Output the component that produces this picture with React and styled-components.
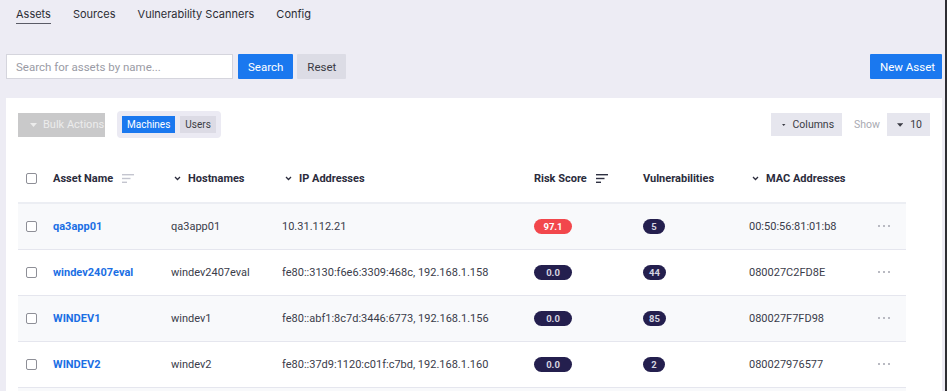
import styled, { createGlobalStyle } from "styled-components";

const GlobalStyle = createGlobalStyle`
  html, body {
    margin: 0;
    padding: 0;
    overflow: hidden;
    background: #edecf4;
  }
  body {
    font-family: Roboto, "Noto Sans", sans-serif;
    color: #3a3c4a;
  }
`;

const rows = [
  {
    name: "qa3app01",
    host: "qa3app01",
    ip: "10.31.112.21",
    risk: "97.1",
    high: true,
    vulns: "5",
    mac: "00:50:56:81:01:b8",
  },
  {
    name: "windev2407eval",
    host: "windev2407eval",
    ip: "fe80::3130:f6e6:3309:468c, 192.168.1.158",
    risk: "0.0",
    vulns: "44",
    mac: "080027C2FD8E",
  },
  {
    name: "WINDEV1",
    host: "windev1",
    ip: "fe80::abf1:8c7d:3446:6773, 192.168.1.156",
    risk: "0.0",
    vulns: "85",
    mac: "080027F7FD98",
  },
  {
    name: "WINDEV2",
    host: "windev2",
    ip: "fe80::37d9:1120:c01f:c7bd, 192.168.1.160",
    risk: "0.0",
    vulns: "2",
    mac: "080027976577",
  },
];

const Caret = () => (
  <svg width="7" height="4" viewBox="0 0 7 4">
    <path d="M0 0h7L3.5 4z" fill="currentColor" />
  </svg>
);

const Chevron = () => (
  <svg width="7" height="5" viewBox="0 0 7 5">
    <path d="M1 1l2.5 2.5L6 1" fill="none" stroke="currentColor" strokeWidth="1.3" />
  </svg>
);

const SortIcon = ({ active }) => (
  <svg width="12" height="9" viewBox="0 0 12 9">
    <g fill={active ? "#2f3142" : "#c4c5cf"}>
      <rect x="0" y="0" width="12" height="1.4" />
      <rect x="0" y="3.8" width="8.5" height="1.4" />
      <rect x="0" y="7.6" width="5" height="1.4" />
    </g>
  </svg>
);

const MoreIcon = () => (
  <svg width="13" height="3" viewBox="0 0 13 3">
    <g fill="#b9bac2">
      <rect x="0" y="0" width="2" height="2" />
      <rect x="5" y="0" width="2" height="2" />
      <rect x="10" y="0" width="2" height="2" />
    </g>
  </svg>
);

const App = () => {
  return (
    <Page>
      <GlobalStyle />
      <Nav>
        <NavItem $active>Assets</NavItem>
        <NavItem>Sources</NavItem>
        <NavItem>Vulnerability Scanners</NavItem>
        <NavItem>Config</NavItem>
      </Nav>

      <SearchRow>
        <SearchGroup>
          <SearchInput placeholder="Search for assets by name..." />
          <Button $primary>Search</Button>
          <Button>Reset</Button>
        </SearchGroup>
        <Button $primary $wide>New Asset</Button>
      </SearchRow>

      <Panel>
        <Toolbar>
          <ToolGroup>
            <BulkButton>
              <Caret />
              Bulk Actions
            </BulkButton>
            <Toggle>
              <ToggleItem $active>Machines</ToggleItem>
              <ToggleItem>Users</ToggleItem>
            </Toggle>
          </ToolGroup>
          <ToolGroup>
            <GreyButton>
              <Caret />
              Columns
            </GreyButton>
            <ShowLabel>Show</ShowLabel>
            <GreyButton $small>
              <Caret />
              10
            </GreyButton>
          </ToolGroup>
        </Toolbar>

        <Table>
          <colgroup>
            <col style={{ width: 35 }} />
            <col style={{ width: 118 }} />
            <col style={{ width: 111 }} />
            <col style={{ width: 252 }} />
            <col style={{ width: 109 }} />
            <col style={{ width: 106 }} />
            <col style={{ width: 121 }} />
            <col style={{ width: 36 }} />
          </colgroup>
          <thead>
            <tr>
              <Th>
                <Check />
              </Th>
              <Th>
                <HeadLabel>
                  Asset Name <SortIcon />
                </HeadLabel>
              </Th>
              <Th>
                <HeadLabel $chev>
                  <Chevron /> Hostnames
                </HeadLabel>
              </Th>
              <Th>
                <HeadLabel $chev>
                  <Chevron /> IP Addresses
                </HeadLabel>
              </Th>
              <Th>
                <HeadLabel>
                  Risk Score <SortIcon active />
                </HeadLabel>
              </Th>
              <Th>Vulnerabilities</Th>
              <Th>
                <HeadLabel $chev>
                  <Chevron /> MAC Addresses
                </HeadLabel>
              </Th>
              <Th />
            </tr>
          </thead>
          <tbody>
            {rows.map((r, i) => (
              <Row key={r.name} $striped={i % 2 === 0}>
                <Td>
                  <Check />
                </Td>
                <Td>
                  <NameLink>{r.name}</NameLink>
                </Td>
                <Td>{r.host}</Td>
                <Td>{r.ip}</Td>
                <Td>
                  <Badge $red={r.high} $wide>
                    {r.risk}
                  </Badge>
                </Td>
                <Td>
                  <Badge>{r.vulns}</Badge>
                </Td>
                <Td>{r.mac}</Td>
                <Td>
                  <MoreIcon />
                </Td>
              </Row>
            ))}
            <FillerRow>
              <td colSpan={8} />
            </FillerRow>
          </tbody>
        </Table>
      </Panel>
    </Page>
  );
};

const Page = styled.div`
  height: 391px;
  box-sizing: border-box;
  padding: 0 3px 0 6px;
  border-right: 2px solid #2e2e33;
  background: #edecf4;
`;

const Nav = styled.nav`
  display: flex;
  gap: 22px;
  padding: 7px 0 0 10px;
  height: 30px;
  box-sizing: border-box;
`;

const NavItem = styled.div`
  font-family: Inter, "Noto Sans", sans-serif;
  font-size: 11px;
  color: #2c2d35;
  height: 16px;
  border-bottom: 1px solid ${(p) => (p.$active ? "#5a5b66" : "transparent")};
`;

const SearchRow = styled.div`
  display: flex;
  justify-content: space-between;
  margin-top: 24px;
`;

const SearchGroup = styled.div`
  display: flex;
  gap: 4px;
`;

const SearchInput = styled.input`
  width: 227px;
  height: 25px;
  box-sizing: border-box;
  border: 1px solid #d5d5dd;
  background: #fff;
  padding: 0 9px;
  font-family: Roboto, sans-serif;
  font-size: 11.5px;
  margin-right: 1px;
  outline: none;
  &::placeholder {
    color: #9a9ba5;
  }
`;

const Button = styled.button`
  height: 25px;
  border: none;
  border-radius: 1px;
  padding: 0 10px;
  white-space: nowrap;
  font-family: Roboto, sans-serif;
  font-size: 11.5px;
  background: ${(p) => (p.$primary ? "#1a78ef" : "#dcdce5")};
  color: ${(p) => (p.$primary ? "#fff" : "#3a3b44")};
  min-width: ${(p) => (p.$primary && !p.$wide ? "55px" : "47px")};
  width: ${(p) => (p.$wide ? "72px" : "auto")};
`;

const Panel = styled.div`
  margin-top: 19px;
  background: #fff;
  padding: 12px 12px 0 12px;
  height: 300px;
  box-sizing: border-box;
`;

const Toolbar = styled.div`
  display: flex;
  justify-content: space-between;
  align-items: center;
  height: 27px;
  margin-top: 1px;
`;

const ToolGroup = styled.div`
  display: flex;
  align-items: center;
  gap: 12px;
`;

const BulkButton = styled.div`
  display: flex;
  align-items: center;
  gap: 6px;
  width: 87px;
  height: 24px;
  box-sizing: border-box;
  padding-left: 12px;
  background: #c9c9ca;
  color: #ececec;
  font-size: 11px;
  white-space: nowrap;
`;

const Toggle = styled.div`
  display: flex;
  gap: 5px;
  padding: 5px;
  border-radius: 4px;
  background: #ebeaf3;
`;

const ToggleItem = styled.div`
  height: 17px;
  line-height: 17px;
  padding: 0 5px;
  font-size: 10px;
  background: ${(p) => (p.$active ? "#1a78ef" : "#dcdbe5")};
  color: ${(p) => (p.$active ? "#fff" : "#3a3b44")};
`;

const GreyButton = styled.div`
  display: flex;
  align-items: center;
  gap: 7px;
  height: 23px;
  padding: 0 ${(p) => (p.$small ? "8px 0 10px" : "8px 0 11px")};
  background: #e6e6ee;
  color: #3a3b44;
  font-size: 10.5px;
  width: ${(p) => (p.$small ? "43px" : "71px")};
  box-sizing: border-box;
`;

const ShowLabel = styled.span`
  font-size: 10.5px;
  color: #a9aab2;
  margin-right: -5px;
`;

const Table = styled.table`
  width: 888px;
  table-layout: fixed;
  border-collapse: collapse;
  margin-top: 16px;
`;

const Th = styled.th`
  height: 48px;
  padding: 0;
  text-align: left;
  font-size: 11px;
  font-weight: 700;
  color: #2b2c3c;
  border-bottom: 2px solid #eceef3;
  &:first-child {
    padding-left: 8px;
  }
`;

const HeadLabel = styled.span`
  display: inline-flex;
  align-items: center;
  gap: ${(p) => (p.$chev ? "7px" : "9px")};
  margin-left: ${(p) => (p.$chev ? "3px" : "0")};
  svg {
    margin-top: 1px;
  }
`;

const Row = styled.tr`
  background: ${(p) => (p.$striped ? "#f8f9fb" : "#fff")};
`;

const FillerRow = styled.tr`
  background: #f8f9fb;
  td {
    height: 20px;
  }
`;

const Td = styled.td`
  height: 45px;
  padding: 0;
  font-size: 11px;
  color: #3a3c4a;
  white-space: nowrap;
  border-bottom: 1px solid #e5e6ee;
  &:first-child {
    padding-left: 8px;
  }
  svg {
    display: block;
    margin-left: 8px;
  }
`;

const Check = styled.span`
  display: block;
  width: 11px;
  height: 11px;
  box-sizing: border-box;
  border: 1px solid #8e8f97;
  border-radius: 2px;
  background: #fff;
`;

const NameLink = styled.span`
  color: #1b6fe4;
  font-weight: 700;
`;

const Badge = styled.span`
  display: inline-block;
  min-width: ${(p) => (p.$wide ? "38px" : "22px")};
  height: 15px;
  line-height: 15px;
  padding: 0 6px;
  box-sizing: border-box;
  border-radius: 8px;
  text-align: center;
  font-size: 9.5px;
  font-weight: 700;
  background: ${(p) => (p.$red ? "#f2474c" : "#241f4e")};
  color: ${(p) => (p.$red ? "#fff" : "#d5d5e0")};
`;

export default App;
